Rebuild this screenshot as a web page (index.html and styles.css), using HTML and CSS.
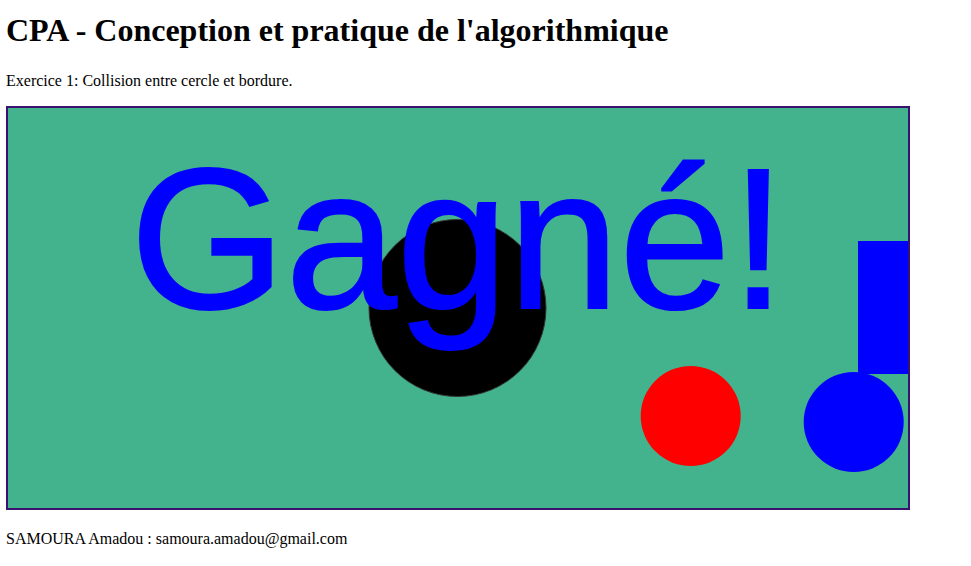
FILE: index.html
```html
<!DOCTYPE html>
<html lang="fr">
<head>
<meta charset="utf-8">
<title>CPA - Conception et pratique de l'algorithmique</title>
<link rel="stylesheet" href="styles.css">
</head>
<body>
<h1 class="title">CPA - Conception et pratique de l'algorithmique</h1>
<p class="intro">Exercice 1: Collision entre cercle et bordure.</p>
<div class="board">
  <svg class="scene" width="900" height="400" viewBox="0 0 900 400" xmlns="http://www.w3.org/2000/svg">
    <rect x="0" y="0" width="900" height="400" fill="#42b38d"/>
    <circle cx="449.5" cy="200" r="88.5" fill="#000" stroke="#333" stroke-width="1"/>
    <text x="450" y="200" text-anchor="middle" class="win">Gagné!</text>
    <circle cx="682.7" cy="308" r="50" fill="#ff0000"/>
    <rect x="850" y="133" width="50" height="133" fill="#0000ff"/>
    <circle cx="845.7" cy="314" r="50" fill="#0000ff"/>
  </svg>
</div>
<p class="author">SAMOURA Amadou : samoura.amadou@gmail.com</p>
</body>
</html>
```
FILE: styles.css
```css
html, body {
  background: #ffffff;
}
body {
  margin: 0;
  padding: 0 6px;
  font-family: "Liberation Serif", "Times New Roman", serif;
  color: #000;
}
.title {
  font-size: 32px;
  line-height: 37px;
  font-weight: bold;
  margin: 12px 0 0;
}
.intro {
  font-size: 16px;
  line-height: 18px;
  margin: 23px 0 0;
}
.board {
  margin-top: 16px;
  width: 900px;
  height: 400px;
  border: 2px solid #391270;
}
.scene {
  display: block;
}
.win {
  font-family: "Liberation Sans", Arial, sans-serif;
  font-size: 200px;
  fill: #0000ff;
  stroke: #0000ff;
  stroke-width: 2px;
}
.author {
  font-size: 16px;
  line-height: 18px;
  margin: 20px 0 0;
}
```
